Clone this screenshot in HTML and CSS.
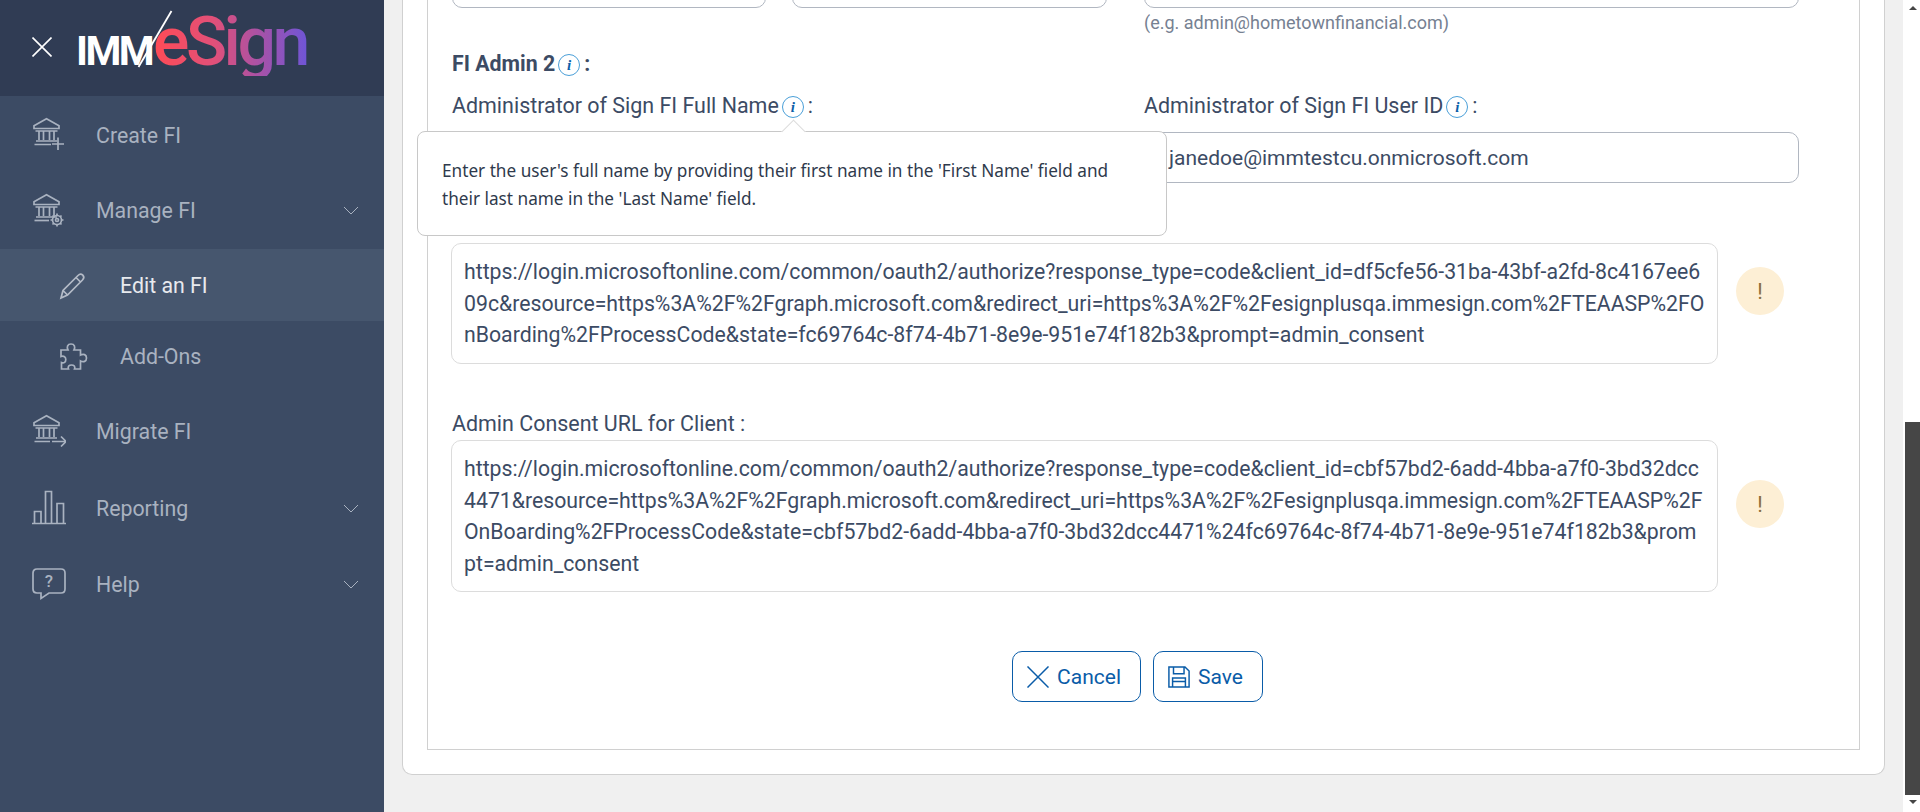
FILE: index.html
```html
<!DOCTYPE html>
<html lang="en">
<head>
  <meta charset="UTF-8">
  <title>IMM eSign - Edit an FI</title>
  <link rel="stylesheet" href="styles.css">
</head>
<body>
  <svg class="defs" width="0" height="0">
    <symbol id="bank" viewBox="0 0 34 36">
      <path d="M2 11.5V8.8L14.5 1.8L27 8.8V11.5ZM3.5 14H25.5M7 14V23M11.5 14V23M17.5 14V23M22 14V23M4 24H25"/>
    </symbol>
  </svg>
  <div class="app">
    <aside class="sidebar">
      <div class="brand">
        <svg class="close-icon" viewBox="0 0 20 20"><path d="M0.5 0.5L19.5 19.5M19.5 0.5L0.5 19.5"/></svg>
        <div class="logo">
          <span class="logo-imm">IMM</span>
          <span class="logo-esign">eSign</span>
          <svg class="logo-slash" viewBox="0 0 36 58"><path d="M34.5 1L1.5 57"/></svg>
        </div>
      </div>
      <nav class="nav">
        <a class="nav-item first">
          <svg class="nav-icon" viewBox="0 0 34 36">
            <use href="#bank"/>
            <path d="M2.5 27.5H19M26 20.5V33M20 27H32"/>
          </svg>
          <span>Create FI</span>
        </a>
        <a class="nav-item">
          <svg class="nav-icon" viewBox="0 0 34 36">
            <use href="#bank"/>
            <path d="M2.5 27.5H17"/>
            <circle cx="25" cy="27" r="4.5"/>
            <circle cx="25" cy="27" r="1.5"/>
            <path d="M25 20.5V22.5M25 31.5V33.5M18.5 27H20.5M29.5 27H31.5M20.5 22.5L21.8 23.8M28.2 30.2L29.5 31.5M29.5 22.5L28.2 23.8M21.8 30.2L20.5 31.5"/>
          </svg>
          <span>Manage FI</span>
          <svg class="chevron" viewBox="0 0 16 9"><path d="M1 1L8 8L15 1"/></svg>
        </a>
        <a class="nav-item sub active">
          <svg class="nav-icon" viewBox="0 0 34 36">
            <path d="M5 31L7 23.5L22 8.5C23.5 7 25.5 7 26.8 8.2C28 9.5 28 11.5 26.5 13L11.5 28ZM7 23.5L11.5 28M20 10.5L24.5 15"/>
          </svg>
          <span>Edit an FI</span>
        </a>
        <a class="nav-item sub last">
          <svg class="nav-icon" viewBox="0 0 34 36">
            <path d="M5 11H12C10.5 8 11.5 5 15 5C18.5 5 19.5 8 18 11H24.5V16C27.5 14.5 30.5 15.5 30.5 19C30.5 22.5 27.5 23.5 24.5 22V30H18.5C19.5 27.5 18 26 15.5 26C13 26 11.5 27.5 12.5 30H5.5V23.5C8 24.5 9.8 23 9.8 20.5C9.8 18 8 16.5 5 17.5Z"/>
          </svg>
          <span>Add-Ons</span>
        </a>
        <a class="nav-item">
          <svg class="nav-icon" viewBox="0 0 34 36">
            <use href="#bank"/>
            <path d="M2.5 27.5H18M20 27.5H34M29 22.5L34 27.5L29 32.5"/>
          </svg>
          <span>Migrate FI</span>
        </a>
        <a class="nav-item">
          <svg class="nav-icon" viewBox="0 0 34 36">
            <path d="M0 33.5H34M2.5 33V21.5H9V33M13.5 33V1.5H19.5V33M25 33V13.5H31.5V33"/>
          </svg>
          <span>Reporting</span>
          <svg class="chevron" viewBox="0 0 16 9"><path d="M1 1L8 8L15 1"/></svg>
        </a>
        <a class="nav-item">
          <svg class="nav-icon help" viewBox="0 0 34 36">
            <path d="M5 2H29C31.5 2 33 3.5 33 6V22C33 24.5 31.5 26 29 26H17L9 31.5V26H5C2.5 26 1 24.5 1 22V6C1 3.5 2.5 2 5 2Z"/>
            <text x="17" y="20" text-anchor="middle">?</text>
          </svg>
          <span>Help</span>
          <svg class="chevron" viewBox="0 0 16 9"><path d="M1 1L8 8L15 1"/></svg>
        </a>
      </nav>
    </aside>

    <main class="main">
      <section class="card">
        <div class="form-box">
          <div class="field-grid">
            <div class="name-pair">
              <div class="input"></div>
              <div class="input"></div>
            </div>
            <div>
              <div class="input"></div>
              <div class="hint">(e.g. admin@hometownfinancial.com)</div>
            </div>
          </div>

          <h3 class="admin-title">FI Admin 2<i class="info">i</i><span class="colon">:</span></h3>

          <div class="field-grid admin-fields">
            <div class="field">
              <label class="label">Administrator of Sign FI Full Name<i class="info">i</i><span class="colon">:</span></label>
              <div class="input"></div>
              <div class="tooltip">
                Enter the user's full name by providing their first name in the 'First Name' field and their last name in the 'Last Name' field.
              </div>
            </div>
            <div class="field">
              <label class="label">Administrator of Sign FI User ID<i class="info">i</i><span class="colon">:</span></label>
              <div class="input">janedoe@immtestcu.onmicrosoft.com</div>
            </div>
          </div>

          <label class="label url-label first">Admin Consent URL for FI :</label>
          <div class="url-row">
            <div class="url-box">https://login.microsoftonline.com/common/oauth2/authorize?response_type=code&amp;client_id=df5cfe56-31ba-43bf-a2fd-8c4167ee609c&amp;resource=https%3A%2F%2Fgraph.microsoft.com&amp;redirect_uri=https%3A%2F%2Fesignplusqa.immesign.com%2FTEAASP%2FOnBoarding%2FProcessCode&amp;state=fc69764c-8f74-4b71-8e9e-951e74f182b3&amp;prompt=admin_consent</div>
            <span class="warn">!</span>
          </div>

          <label class="label url-label">Admin Consent URL for Client :</label>
          <div class="url-row">
            <div class="url-box">https://login.microsoftonline.com/common/oauth2/authorize?response_type=code&amp;client_id=cbf57bd2-6add-4bba-a7f0-3bd32dcc4471&amp;resource=https%3A%2F%2Fgraph.microsoft.com&amp;redirect_uri=https%3A%2F%2Fesignplusqa.immesign.com%2FTEAASP%2FOnBoarding%2FProcessCode&amp;state=cbf57bd2-6add-4bba-a7f0-3bd32dcc4471%24fc69764c-8f74-4b71-8e9e-951e74f182b3&amp;prompt=admin_consent</div>
            <span class="warn">!</span>
          </div>

          <div class="actions">
            <button class="btn">
              <svg class="btn-icon" viewBox="0 0 24 24"><path d="M0.5 0.5L23.5 23.5M23.5 0.5L0.5 23.5"/></svg>
              Cancel
            </button>
            <button class="btn">
              <svg class="btn-icon" viewBox="0 0 24 24"><path d="M1 1H18.5L23 5.5V23H1ZM6 1V8.5H17.5V1M5 23V13H19V23M5 17H19"/></svg>
              Save
            </button>
          </div>
        </div>
      </section>
    </main>

    <div class="scrollbar">
      <span class="arrow up"></span>
      <div class="thumb"></div>
      <span class="arrow down"></span>
    </div>
  </div>
</body>
</html>
```

FILE: styles.css
```css
* {
  box-sizing: border-box;
}

html, body {
  height: 100%;
  margin: 0;
  overflow: hidden;
}

body {
  font-family: Roboto, "Liberation Sans", sans-serif;
  font-size: 21.33px;
  color: #3c4b64;
  background-color: #f0f0f0;
}

.defs {
  position: absolute;
}

.app {
  display: flex;
  height: 812px;
}

/* sidebar */
.sidebar {
  width: 384px;
  flex-shrink: 0;
  background-color: #3c4b64;
}

.brand {
  display: flex;
  align-items: center;
  height: 96px;
  padding-left: 32px;
  background-color: #303c54;
}

.close-icon {
  width: 20px;
  height: 20px;
  margin-top: -3px;
  fill: none;
  stroke: #fff;
  stroke-width: 1.6;
}

.logo {
  position: relative;
  display: flex;
  align-items: baseline;
  margin-left: 24px;
  margin-top: -13px;
  line-height: 1;
}

.logo-imm {
  font-size: 41px;
  font-weight: 700;
  color: #fff;
  letter-spacing: -2.6px;
}

.logo-esign {
  margin-left: 1px;
  font-size: 68px;
  font-weight: 500;
  letter-spacing: -3.5px;
  background: linear-gradient(90deg, #ff4b55 0%, #e0507a 40%, #a652a8 70%, #6f55d6 100%);
  -webkit-background-clip: text;
  background-clip: text;
  color: transparent;
}

.logo-slash {
  position: absolute;
  left: 61px;
  top: 2px;
  width: 36px;
  height: 58px;
  fill: none;
  stroke: #fff;
  stroke-width: 1.8;
}

.nav-item {
  display: flex;
  align-items: center;
  height: 76.4px;
  padding-left: 32px;
  padding-right: 25px;
  color: #a9b2c0;
}

.nav-item.first {
  padding-top: 2px;
}

.nav-item.sub {
  height: 72.5px;
  padding-left: 56px;
}

.nav-item.last {
  padding-bottom: 2px;
}

.nav-item.active {
  background-color: #46566e;
  color: #e8eaee;
}

.nav-icon {
  width: 34px;
  height: 36px;
  margin-right: 30px;
  fill: none;
  stroke: #a9b2c0;
  stroke-width: 1.7;
}

.nav-item.active .nav-icon {
  stroke: #b4bbc7;
}

.help text {
  font-size: 17px;
  font-weight: 500;
  fill: #a9b2c0;
  stroke: none;
}

.chevron {
  width: 16px;
  height: 9px;
  margin-left: auto;
  fill: none;
  stroke: #a9b2c0;
  stroke-width: 1;
}

/* content */
.main {
  flex: 1;
  min-width: 0;
  padding: 0 18px;
  overflow: hidden;
}

.card {
  margin-top: -100px;
  height: 875px;
  padding: 0 24px 24px;
  background-color: #fff;
  border: 1px solid #d0d0d0;
  border-top: 0;
  border-radius: 0 0 10px 10px;
}

.form-box {
  height: 100%;
  padding: 57px 24px 0;
  border: 1px solid #d0d0d0;
  border-top: 0;
}

.field-grid {
  display: grid;
  grid-template-columns: 655px 655px;
  gap: 37px;
}

.name-pair {
  display: grid;
  grid-template-columns: 314px 315px;
  gap: 26px;
}

.input {
  height: 51px;
  padding: 0 24px;
  font-size: 21px;
  line-height: 51px;
  background-color: #fff;
  border: 1px solid #b1b7c1;
  border-radius: 10px;
}

.hint {
  margin-top: 5px;
  font-size: 18px;
  line-height: 20px;
  color: #768192;
}

.admin-title {
  margin: 18px 0 0;
  font-size: 21.33px;
  font-weight: 700;
  line-height: 26px;
}

.colon {
  margin-left: 4px;
}

.info {
  display: inline-block;
  width: 22px;
  height: 22px;
  margin-left: 3px;
  font-family: "Liberation Serif", serif;
  font-size: 15px;
  font-weight: 700;
  line-height: 20px;
  text-align: center;
  vertical-align: 1px;
  color: #0b5ea8;
  border: 1px solid #4a9fd8;
  border-radius: 50%;
}

.admin-fields {
  margin-top: 16px;
}

.field {
  position: relative;
}

.label {
  display: block;
  font-size: 21.45px;
  line-height: 26px;
}

.admin-fields .label {
  margin-bottom: 13px;
}

.tooltip {
  position: absolute;
  left: -35px;
  top: 38px;
  z-index: 2;
  width: 750px;
  height: 105px;
  padding: 25px 40px 0 24px;
  font-family: "Noto Sans", sans-serif;
  font-size: 17.2px;
  line-height: 28px;
  color: #2f3a4c;
  background-color: #fff;
  border: 1px solid #c8c8c8;
  border-radius: 8px;
}

.tooltip::before {
  content: "";
  position: absolute;
  left: 367px;
  top: -9px;
  width: 16px;
  height: 16px;
  background-color: #fff;
  border-left: 1px solid #dcdcdc;
  border-top: 1px solid #dcdcdc;
  transform: rotate(45deg);
}

.url-label {
  margin-top: 47.5px;
  margin-bottom: 3px;
}

.url-label.first {
  margin-top: 28px;
  margin-bottom: 6px;
}

.url-row {
  display: flex;
  align-items: center;
  margin-left: -1px;
}

.url-box {
  width: 1267px;
  padding: 12px;
  font-size: 21.25px;
  line-height: 31.5px;
  word-break: break-all;
  border: 1px solid #dcdcdc;
  border-radius: 10px;
}

.warn {
  display: flex;
  align-items: center;
  justify-content: center;
  width: 48px;
  height: 48px;
  margin-left: 18px;
  margin-bottom: 24px;
  font-weight: 400;
  color: #8a6d3b;
  background-color: #fdefd5;
  border-radius: 50%;
}

.actions {
  display: flex;
  justify-content: center;
  gap: 12px;
  margin-top: 59px;
  margin-left: -12px;
}

.btn {
  display: flex;
  align-items: center;
  gap: 8px;
  height: 51px;
  padding: 0 19px 0 14px;
  font-family: inherit;
  font-size: 21px;
  color: #0a5ca8;
  background-color: #fff;
  border: 1px solid #0a5ca8;
  border-radius: 10px;
}

.btn-icon {
  width: 22px;
  height: 22px;
  fill: none;
  stroke: #0a5ca8;
  stroke-width: 1.6;
}

/* scrollbar */
.scrollbar {
  display: flex;
  flex-direction: column;
  align-items: center;
  width: 17px;
  flex-shrink: 0;
  padding-left: 2px;
  background-color: #fff;
}

.thumb {
  width: 15px;
  height: 373px;
  margin-top: 412px;
  background-color: #464646;
}

.arrow {
  width: 0;
  height: 0;
  border-left: 4px solid transparent;
  border-right: 4px solid transparent;
}

.arrow.up {
  margin-top: 6px;
  border-bottom: 4px solid #464646;
}

.arrow.down {
  margin-top: 5px;
  border-top: 4px solid #464646;
}
```
